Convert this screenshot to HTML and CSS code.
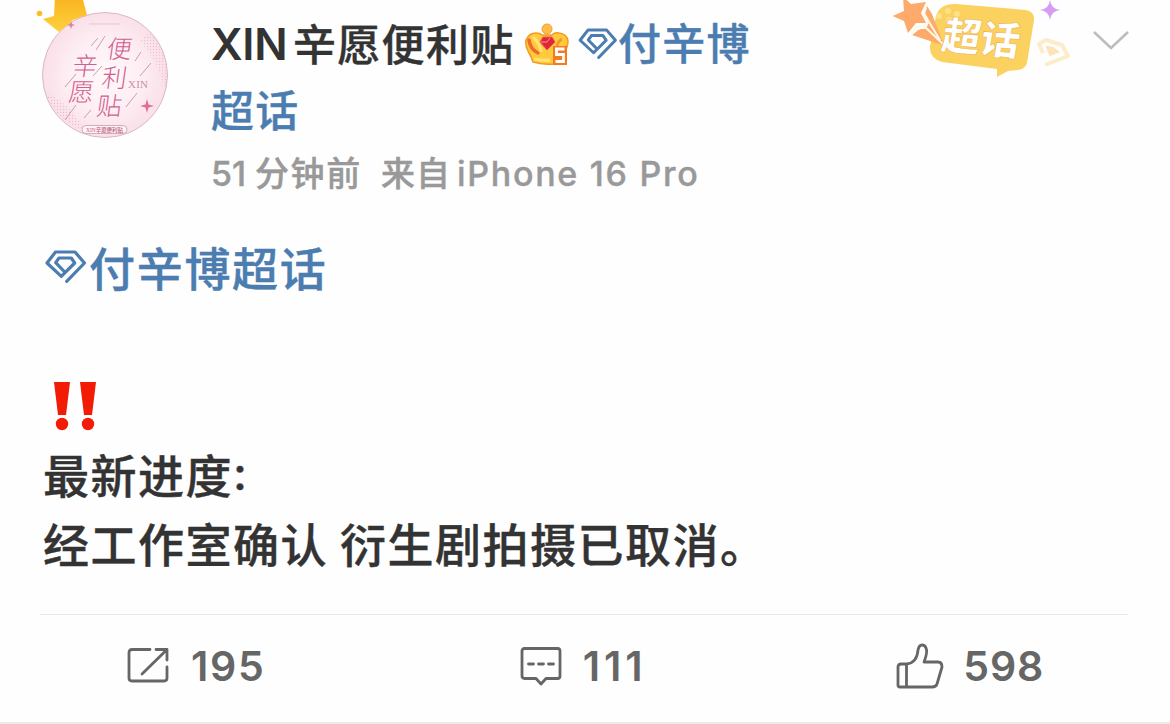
FILE: index.html
```html
<!DOCTYPE html>
<html lang="zh-CN">
<head>
    <meta charset="UTF-8">
    <meta name="viewport" content="width=device-width, initial-scale=1.0">
    <title>XIN辛愿便利贴</title>
    <link rel="stylesheet" href="styles.css">
</head>
<body>
    <svg width="0" height="0" class="defs">
        <symbol id="gem" viewBox="0 0 42 34">
            <path d="M21.700 31.300 39.500 13 30 2H10.500L2 13 16.300 26.300 29.700 13 26.300 8H14L10.700 12.700 18.700 21" fill="none" stroke="currentColor" stroke-width="3.200" stroke-linecap="round" stroke-linejoin="round"/>
        </symbol>
    </svg>

    <article class="post">
        <header class="top">
            <svg class="avatar" viewBox="0 0 150 150">
                <defs>
                    <radialGradient id="pink">
                        <stop offset="0" stop-color="#fff9fb"/>
                        <stop offset=".6" stop-color="#fdeef3"/>
                        <stop offset="1" stop-color="#fadfe9"/>
                    </radialGradient>
                    <pattern id="dots" width="3" height="3" patternUnits="userSpaceOnUse">
                        <circle cx="1.500" cy="1.500" r=".7" fill="#e6a9bf"/>
                    </pattern>
                    <linearGradient id="gold" x2="0" y2="1">
                        <stop offset="0" stop-color="#f9b21f"/>
                        <stop offset="1" stop-color="#ffd23c"/>
                    </linearGradient>
                </defs>
                <circle cx="70" cy="75" r="62.500" fill="url(#pink)" stroke="#d9b9c5"/>
                <path d="M8 19 19 16 20-4H47L52 15 38 20 24 32Z" fill="url(#gold)"/>
                <circle cx="4.500" cy="13.500" r="2.800" fill="#fbbd27"/>
                <path d="M104 40Q124 62 130 92 138 62 116 32Z" fill="url(#dots)" opacity=".6"/>
                <path d="M11 94Q30 98 50 130 22 122 11 94Z" fill="url(#dots)" opacity=".7"/>
                <path d="M54 24h31" stroke="#e8c5d1" stroke-width="1"/>
                <path d="M70 36 61 50M63 38 56 46M106 52 100 61M116 63 105 76M41 74 30 87M67 66 58 76M41 105 30 120M102 93 91 107M56 110 49 118" stroke="#b98a9b" stroke-width=".8"/>
                <g class="avatar-text" transform="skewX(-8)">
                    <text x="79" y="58">便</text>
                    <text x="78" y="87">利</text>
                    <text x="77" y="115">贴</text>
                    <text x="47" y="75">辛</text>
                    <text x="47" y="101">愿</text>
                </g>
                <text class="avatar-xin" x="93" y="88" textLength="20">XIN</text>
                <path d="M112 99 113.500 104.500 119 106 113.500 107.500 112 113 110.500 107.500 105 106 110.500 104.500Z" fill="#dd6f97"/>
                <path d="M36 21 37 24 40 25 37 26 36 29 35 26 32 25 35 24Z" fill="#dd8297"/>
                <rect x="47" y="125.500" width="45" height="8" rx="4" fill="#fff3f6" stroke="#c99aac" stroke-width=".8"/>
                <text class="avatar-tag" x="51" y="131.500" textLength="37" lengthAdjust="spacingAndGlyphs">XIN辛愿便利贴</text>
            </svg>

            <div class="author">
                <h1 class="name">
                    <span class="latin">XIN</span><span class="cjk">辛愿便利贴</span>
                    <svg class="crown" viewBox="0 0 44 42">
                        <path d="M8 39Q6 33 3 28 0 22 1 17 4 10 11 10 15 10 17 12H27Q30 9 34 10 42 11 43 18 43 24 39 30L37 40Q22 43 8 39Z" fill="#ffcb3c" stroke="#f49a24" stroke-width="1.500"/>
                        <path d="M4 17Q5 26 13 30" fill="none" stroke="#f2692b" stroke-width="3.500" stroke-linecap="round"/>
                        <path d="M37 16Q33 18 32 23" fill="none" stroke="#f49432" stroke-width="3"/>
                        <path d="M8 14Q16 22 16 29M9 36Q18 38 25 37" stroke="#ffe37a" stroke-width="3" fill="none"/>
                        <circle cx="22" cy="6" r="5" fill="#ffbd47" stroke="#f3a034"/>
                        <path d="M18 14h9l3 5-8 8-7-8Z" fill="#df2636" stroke="#ef5860"/>
                        <path d="M16 19h6l3-4" fill="none" stroke="#ff918f"/>
                        <rect x="28" y="23" width="14" height="19" fill="#f47b20"/>
                        <path d="M39.500 26H31.500V31.500H38.500V38.500H30.500" fill="none" stroke="#fff" stroke-width="2.800"/>
                    </svg>
                    <a class="topic"><svg class="gem"><use href="#gem"/></svg><span class="zh">付辛博</span></a>
                </h1>
                <a class="topic second">超话</a>
                <p class="meta"><span class="num">51</span><span class="ago">分钟前</span><span class="from">来自</span><span class="device">iPhone 16 Pro</span></p>
            </div>

            <svg class="badge" viewBox="0 0 180 80">
                <path d="M66 4 136 10Q145 12 144 20L137 63Q135 69 128 70L118 71 107 77 107 69 52 62Q39 58 40 46L46 16Q50 3 66 4Z" fill="#fbd25f"/>
                <g fill="#fde08a"><circle cx="49" cy="16" r="3"/><circle cx="58" cy="11" r="3"/><circle cx="67" cy="14" r="3"/><circle cx="59" cy="20" r="3"/></g>
                <path d="M22 35 31 29 36 29 39 22 35 14 37 6 42 14 54 45Z" fill="#fdaa6a"/>
                <path d="M2.500 16 14 11 13-3 21 4 36 2 31 13 36 23 26 23 18 33 14 21Z" fill="#fdaa6a"/>
                <path d="M21 36 26 27 34 26 54 45M34 26 39 22 34 13 36 8M39 22 50 40" fill="none" stroke="#fff8e6" stroke-width="2" stroke-linejoin="round"/>
                <path d="M23 35 28 30 33 29 52 45Z" fill="#fdaa6a"/>
                <text class="badge-text" transform="translate(50 49) rotate(5) skewX(-5)">超话</text>
                <path d="M160 0Q161 9 170 10 161 11 160 20 159 11 150 10 159 9 160 0Z" fill="#d69bf3"/>
                <path d="M153 53 149 44 156 40 172 45 178 56 155 65" fill="none" stroke="#fdecca" stroke-width="4" stroke-linejoin="round"/>
                <path d="M157 47 160 55 168 52 163 48Z" fill="#fee2b8" stroke="#fee2b8" stroke-width="2"/>
            </svg>
            <svg class="arrow" viewBox="0 0 38 22"><path d="M2 2 19 18 36 2" fill="none" stroke="#bdbdbd" stroke-width="2.500"/></svg>
        </header>

        <div class="content">
            <p><a class="topic"><svg class="gem"><use href="#gem"/></svg><span class="zh">付辛博超话</span></a></p>
            <p></p>
            <p>
                <svg class="alert" viewBox="0 0 44 50" fill="#f21b05">
                    <path d="M1 1h16l-4 33H5ZM27 1h16l-4 33h-8Z"/>
                    <circle cx="9" cy="43" r="6.200"/>
                    <circle cx="35" cy="43" r="6.200"/>
                </svg>
            </p>
            <p class="zh">最新进度<span class="colon">:</span></p>
            <p class="zh">经工作室确认<span class="space"> </span>衍生剧拍摄已取消。</p>
        </div>

        <footer class="actions">
            <div class="action repost">
                <svg width="42" height="38" viewBox="0 0 42 38"><path d="M23 2.500H5Q2 2.500 2 5.500V31Q2 34 5 34H37Q40 34 40 31V20M40 13V2.500H29M39 3.500 15 27" fill="none" stroke="#666" stroke-width="2.800" stroke-linejoin="round" stroke-linecap="round"/></svg>
                <span>195</span>
            </div>
            <div class="action comment">
                <svg width="42" height="40" viewBox="0 0 42 40"><path d="M4.500 2.500H37.500Q40 2.500 40 5V30Q40 32.500 37.500 32.500H26L21 38 16 32.500H4.500Q2 32.500 2 30V5Q2 2.500 4.500 2.500ZM8.500 18h5M18.500 18h5M28.500 18h5" fill="none" stroke="#666" stroke-width="2.800" stroke-linejoin="round" stroke-linecap="round"/></svg>
                <span>111</span>
            </div>
            <div class="action like">
                <svg width="48" height="46" viewBox="0 0 48 46"><path d="M10.500 21H5Q2 21 2 24V42Q2 44 4 44H36Q40 44 41 41L46 24Q46 19 42 19H28Q32 9 30 5 29 2 26 2 23 2 22 7 21 20 10.500 21V44" fill="none" stroke="#666" stroke-width="2.800" stroke-linejoin="round"/></svg>
                <span>598</span>
            </div>
        </footer>
    </article>
</body>
</html>
```
FILE: styles.css
```css
* {
    box-sizing: border-box;
    margin: 0;
    padding: 0;
}

body {
    height: 724px;
    overflow: hidden;
    background-color: #fefefe;
    color: #333;
    font-family: Inter, 'Noto Sans CJK SC', sans-serif;
    font-weight: 500;
}

svg {
    display: block;
    flex: none;
}

.defs {
    position: absolute;
}

.post {
    height: 724px;
    border-bottom: 2px solid #e9ece9;
}

.top {
    display: flex;
    align-items: flex-start;
    height: 234px;
    padding-left: 35px;
}

.avatar {
    width: 150px;
    height: 150px;
}

.avatar-text {
    font-family: 'Liberation Serif', 'Noto Sans CJK SC', serif;
    font-size: 25px;
    font-weight: 300;
    fill: #d1608e;
}

.avatar-xin {
    font-family: 'Liberation Serif', serif;
    font-size: 11px;
    fill: #cc91a7;
}

.avatar-tag {
    font-family: 'Liberation Serif', 'Noto Sans CJK SC', serif;
    font-size: 6px;
    fill: #b96483;
}

.author {
    width: 670px;
    padding: 11px 0 0 26px;
}

.name {
    display: flex;
    align-items: center;
    height: 66px;
    font-size: 43px;
    font-weight: 500;
    white-space: nowrap;
}

.latin {
    width: 82px;
    padding-bottom: 1px;
    font-size: 44px;
    font-weight: 600;
    letter-spacing: -0.3px;
}

.cjk {
    width: 232px;
    padding-bottom: 5px;
    letter-spacing: 1.3px;
}

.cjk,
.topic,
.zh {
    -webkit-text-stroke: 0.4px;
}

.crown {
    width: 44px;
    height: 42px;
    margin-right: 9px;
}

.topic {
    display: flex;
    align-items: center;
    color: #4c7db1;
}

.zh {
    padding-bottom: 6px;
}

.gem {
    width: 40px;
    height: 32px;
}

.author .topic {
    letter-spacing: 1.3px;
}

.second {
    height: 66px;
    padding-bottom: 5px;
    font-size: 43px;
}

.meta {
    display: flex;
    align-items: center;
    height: 62px;
    color: #999;
    font-size: 34px;
    white-space: nowrap;
    -webkit-text-stroke: 0.4px;
}

.num {
    width: 44px;
    padding-bottom: 2px;
}

.ago {
    width: 126px;
    padding-bottom: 5px;
    letter-spacing: 1.6px;
}

.from {
    width: 76px;
    padding-bottom: 5px;
    letter-spacing: 1px;
}

.device {
    padding-bottom: 2px;
    letter-spacing: 1.7px;
}

.badge {
    width: 180px;
    height: 80px;
    margin-left: 35px;
}

.badge-text {
    font-family: 'Noto Sans CJK SC', sans-serif;
    font-size: 39px;
    font-weight: 900;
    fill: #fff;
    stroke: #efb34d;
    stroke-width: 0.6px;
}

.arrow {
    width: 38px;
    height: 22px;
    margin: 30px 0 0 22px;
}

.content {
    height: 380px;
    padding-left: 43px;
    font-size: 46px;
    letter-spacing: 1.5px;
    white-space: nowrap;
}

.content p {
    display: flex;
    align-items: center;
    height: 69px;
}

.content .gem {
    width: 42px;
    height: 34px;
    margin: 0 2px 3px 2px;
}

.content .topic {
    letter-spacing: 1.7px;
}

.alert {
    width: 44px;
    height: 50px;
    margin: 0 0 2px 10px;
}

.space {
    width: 12px;
}

.actions {
    display: flex;
    height: 108px;
    margin: 0 42px 0 40px;
    border-top: 1px solid #e8e8e8;
}

.action {
    display: flex;
    align-items: center;
    width: 33.33%;
    height: 102px;
    color: #666;
    font-size: 41px;
    font-weight: 600;
    letter-spacing: 1.7px;
}

.action span {
    margin-left: 22px;
}

.repost {
    padding-left: 87px;
}

.comment {
    padding-left: 117px;
    letter-spacing: 4px;
}

.comment span {
    margin-left: 21px;
}

.like {
    padding-left: 131px;
    letter-spacing: 0.9px;
}

.like span {
    margin-left: 19px;
}
```
